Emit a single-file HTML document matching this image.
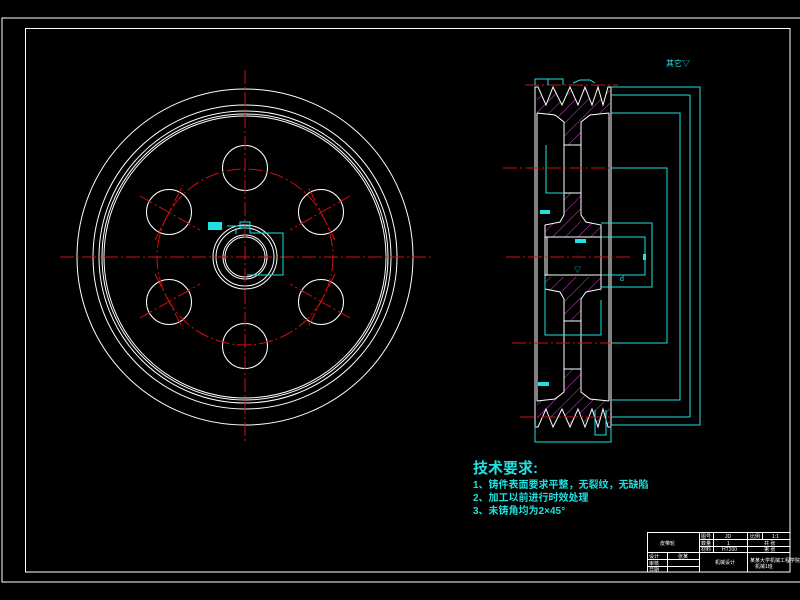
<!DOCTYPE html>
<html><head><meta charset="utf-8"><style>
html,body{margin:0;padding:0;background:#000;width:800px;height:600px;overflow:hidden}
svg{display:block}
text{font-family:"Liberation Sans","Noto Sans CJK SC",sans-serif}
</style></head><body>
<svg width="800" height="600" viewBox="0 0 800 600" xmlns="http://www.w3.org/2000/svg">
<defs>
<pattern id="h" width="9" height="9" patternUnits="userSpaceOnUse" patternTransform="rotate(45)">
<line x1="0" y1="0" x2="0" y2="9" stroke="#d040d0" stroke-width="1"/>
</pattern>
</defs>
<rect x="2" y="18" width="800" height="564" fill="none" stroke="#fff" stroke-width="1"/>
<rect x="25.5" y="28.5" width="764.5" height="543.5" fill="none" stroke="#fff" stroke-width="1"/>

<g fill="none" stroke="#fff" stroke-width="1">
<circle cx="245" cy="257" r="168"/>
<circle cx="245" cy="257" r="152"/>
<circle cx="245" cy="257" r="146"/>
<circle cx="245" cy="257" r="143"/>
<circle cx="245" cy="257" r="141"/>
<circle cx="245" cy="168" r="22.5"/>
<circle cx="245" cy="346" r="22.5"/>
<circle cx="169" cy="212" r="22.5"/>
<circle cx="321" cy="212" r="22.5"/>
<circle cx="169" cy="302" r="22.5"/>
<circle cx="321" cy="302" r="22.5"/>
<circle cx="245" cy="257" r="32"/>
<circle cx="245" cy="257" r="29"/>
<circle cx="245" cy="257" r="22"/>
<circle cx="245" cy="257" r="20"/>
</g>
<g fill="none" stroke="#d01010" stroke-width="1" stroke-dasharray="14 3 2 3">
<line x1="60" y1="257" x2="432" y2="257"/>
<line x1="245" y1="70" x2="245" y2="442"/>
<circle cx="245" cy="257" r="88"/>
<line x1="140" y1="196" x2="200" y2="230"/>
<line x1="350" y1="196" x2="290" y2="230"/>
<line x1="140" y1="318" x2="200" y2="284"/>
<line x1="350" y1="318" x2="290" y2="284"/>
<line x1="155" y1="240" x2="183" y2="185"/>
<line x1="335" y1="240" x2="307" y2="185"/>
<line x1="155" y1="274" x2="183" y2="329"/>
<line x1="335" y1="274" x2="307" y2="329"/>
</g>
<g fill="none" stroke="#20e0e0" stroke-width="1">
<rect x="240" y="222" width="10" height="6"/>
<polyline points="227,226 250,226 250,233 283,233 283,275 247,275"/>
<line x1="236" y1="228" x2="236" y2="234"/>
</g>
<rect x="208" y="222" width="14" height="8" fill="#20e0e0"/>

<g fill="url(#h)" stroke="none">
<path d="M537,87 L538,87 L546,105 L553,87 L562,105 L570,87 L578,105 L585,87 L592,105 L598,87 L603,105 L608,87 L610,87 L610,113 L590,115 L581,122 L581,223 L601,223 L601,237 L545,237 L545,223 L564,223 L564,122 L555,115 L537,113 Z"/>
<path d="M537,427 L538,427 L546,409 L553,427 L562,409 L570,427 L578,409 L585,427 L592,409 L598,427 L603,409 L608,427 L610,427 L610,401 L590,399 L581,392 L581,291 L601,291 L601,277 L545,277 L545,291 L564,291 L564,392 L555,399 L537,401 Z"/>
</g>
<rect x="563" y="145" width="19" height="48" fill="#000"/>
<rect x="563" y="321" width="19" height="48" fill="#000"/>
<g fill="none" stroke="#fff" stroke-width="1">
<polyline points="535,113 535,87 538,87 546,105 553,87 562,105 570,87 578,105 585,87 592,105 598,87 603,105 608,87 611,87 611,113"/>
<polyline points="535,401 535,427 538,427 546,409 553,427 562,409 570,427 578,409 585,427 592,409 598,427 603,409 608,427 611,427 611,401"/>
<line x1="535" y1="113" x2="535" y2="401"/>
<line x1="537" y1="113" x2="537" y2="401"/>
<line x1="609" y1="113" x2="609" y2="401"/>
<line x1="611" y1="113" x2="611" y2="401"/>
<path d="M537,113 L555,115 L564,122 L564,215 L560,222 L545,225 L545,289 L560,292 L564,299 L564,392 L555,399 L537,401"/>
<path d="M609,113 L590,115 L581,122 L581,215 L586,222 L601,225 L601,289 L586,292 L581,299 L581,392 L590,399 L609,401"/>
<line x1="545" y1="237" x2="601" y2="237"/>
<line x1="545" y1="275" x2="601" y2="275"/>
<line x1="547" y1="237" x2="547" y2="275"/>
<line x1="564" y1="145" x2="581" y2="145"/>
<line x1="564" y1="193" x2="581" y2="193"/>
<line x1="564" y1="321" x2="581" y2="321"/>
<line x1="564" y1="369" x2="581" y2="369"/>
</g>
<g fill="none" stroke="#d01010" stroke-width="1" stroke-dasharray="14 3 2 3">
<line x1="503" y1="168" x2="653" y2="168"/>
<line x1="506" y1="257" x2="633" y2="257"/>
<line x1="512" y1="343" x2="653" y2="343"/>
<line x1="525" y1="85" x2="618" y2="85"/>
<line x1="520" y1="417" x2="628" y2="417"/>
</g>
<g fill="none" stroke="#20e0e0" stroke-width="1">
<polyline points="611,87 700,87 700,425 611,425"/>
<polyline points="611,95 690,95 690,417 611,417"/>
<polyline points="611,113 680,113 680,400 611,400"/>
<polyline points="611,168 667,168 667,343 611,343"/>
<polyline points="601,223 652,223 652,287 601,287"/>
<polyline points="601,237 645,237 645,275 601,275"/>
<polyline points="546,145 546,193 563,193"/>
<polyline points="545,276 545,335 601,335 601,300"/>
<polyline points="535,426 535,442 611,442 611,426"/>
<polyline points="595,410 595,435 606,435 606,410"/>
<polyline points="535,85 535,79 563,79 563,85"/>
<polyline points="548,79 548,85"/>
<polyline points="573,83 580,80 590,80 595,83"/>
</g>
<g fill="#20e0e0">
<rect x="540" y="210" width="10" height="4"/>
<rect x="575" y="239" width="11" height="4"/>
<rect x="538" y="382" width="11" height="4"/>
<rect x="643" y="254" width="3" height="6"/>
</g>
<text x="666" y="66" font-size="8" fill="#20e0e0">其它▽</text>
<text x="574" y="272" font-size="7" fill="#20e0e0">▽</text>
<text x="620" y="281" font-size="7" fill="#20e0e0">d</text>

<g fill="#20e0e0" font-family="'Liberation Serif','Noto Serif CJK SC',serif">
<text x="473" y="473" font-size="15" font-weight="bold">技术要求:</text>
<text x="473" y="488" font-size="10" font-weight="bold">1、铸件表面要求平整，无裂纹，无缺陷</text>
<text x="473" y="501" font-size="10" font-weight="bold">2、加工以前进行时效处理</text>
<text x="473" y="514" font-size="10" font-weight="bold">3、未铸角均为2×45°</text>
</g>

<g fill="none" stroke="#fff" stroke-width="1">
<rect x="647.5" y="532.5" width="142.5" height="39.5"/>
<line x1="647" y1="552.5" x2="790" y2="552.5"/>
<line x1="699.5" y1="532" x2="699.5" y2="572"/>
<line x1="747.5" y1="532" x2="747.5" y2="572"/>
<line x1="667.5" y1="552" x2="667.5" y2="572"/>
<line x1="713.5" y1="532" x2="713.5" y2="552"/>
<line x1="762.5" y1="532" x2="762.5" y2="539"/>
<line x1="699" y1="539.5" x2="790" y2="539.5"/>
<line x1="699" y1="546.5" x2="790" y2="546.5"/>
<line x1="647" y1="559.5" x2="699" y2="559.5"/>
<line x1="647" y1="566.5" x2="699" y2="566.5"/>
</g>
<g fill="#fff" font-size="5">
<text x="660" y="545">皮带轮</text>
<text x="701" y="538">图号</text><text x="725" y="538">JD</text><text x="750" y="538">比例</text><text x="772" y="538">1:1</text>
<text x="701" y="545">数量</text><text x="727" y="545">1</text><text x="764" y="545">共 张</text>
<text x="701" y="551">材料</text><text x="722" y="551">HT200</text><text x="764" y="551">第 张</text>
<text x="649" y="558">设计</text><text x="678" y="558">张某</text>
<text x="649" y="565">审核</text>
<text x="649" y="571">日期</text>
<text x="715" y="564">机械设计</text>
<text x="750" y="562">某某大学机械工程学院</text>
<text x="755" y="568">机械1班</text>
</g>
</svg>
</body></html>
